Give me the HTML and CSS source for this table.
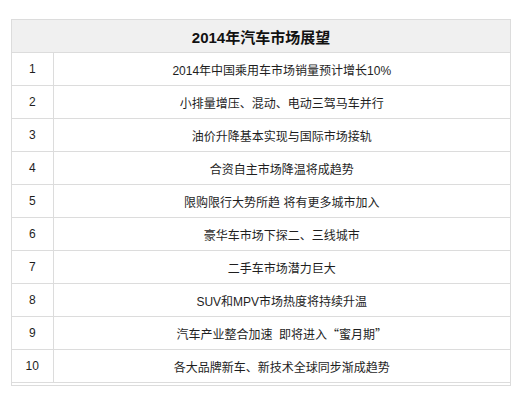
FILE: index.html
```html
<!DOCTYPE html>
<html lang="zh-CN">
<head>
<meta charset="utf-8">
<title>2014年汽车市场展望</title>
<link rel="stylesheet" href="styles.css">
</head>
<body>
<div class="wrap">
<table class="outlook">
<colgroup><col class="col-num"><col class="col-text"></colgroup>
<thead>
<tr><th colspan="2">2014年汽车市场展望</th></tr>
</thead>
<tbody>
<tr><td class="num">1</td><td>2014年中国乘用车市场销量预计增长10%</td></tr>
<tr><td class="num">2</td><td>小排量增压、混动、电动三驾马车并行</td></tr>
<tr><td class="num">3</td><td>油价升降基本实现与国际市场接轨</td></tr>
<tr><td class="num">4</td><td>合资自主市场降温将成趋势</td></tr>
<tr><td class="num">5</td><td>限购限行大势所趋 将有更多城市加入</td></tr>
<tr><td class="num">6</td><td>豪华车市场下探二、三线城市</td></tr>
<tr><td class="num">7</td><td>二手车市场潜力巨大</td></tr>
<tr><td class="num">8</td><td>SUV和MPV市场热度将持续升温</td></tr>
<tr><td class="num">9</td><td>汽车产业整合加速&nbsp; 即将进入<span class="cjk">“</span>蜜月期<span class="cjk">”</span></td></tr>
<tr><td class="num">10</td><td>各大品牌新车、新技术全球同步渐成趋势</td></tr>
</tbody>
</table>
</div>
</body>
</html>
```
FILE: styles.css
```css
html, body {
  margin: 0;
  padding: 0;
  background: #fff;
}
body {
  padding: 19px 11px 0 11px;
  font-family: "Liberation Sans", "Noto Sans CJK SC", sans-serif;
  color: #1e1e1e;
}
.wrap {
  width: 498px;
  border: 1px solid #dcdcdc;
  padding-bottom: 2px;
}
.outlook {
  width: 100%;
  border-collapse: collapse;
  table-layout: fixed;
}
.col-num {
  width: 41px;
}
.outlook th {
  height: 32px;
  padding: 0;
  background: #f0f0f0;
  font-size: 15px;
  font-weight: bold;
  text-align: center;
  border-bottom: 1px solid #dcdcdc;
  color: #111;
}
.outlook td {
  height: 32px;
  padding: 0;
  font-size: 12px;
  text-align: center;
  vertical-align: middle;
  border-bottom: 1px solid #dcdcdc;
}
.outlook td.num {
  border-right: 1px solid #dcdcdc;
}
.cjk {
  font-family: "Noto Sans CJK SC", sans-serif;
}
```
